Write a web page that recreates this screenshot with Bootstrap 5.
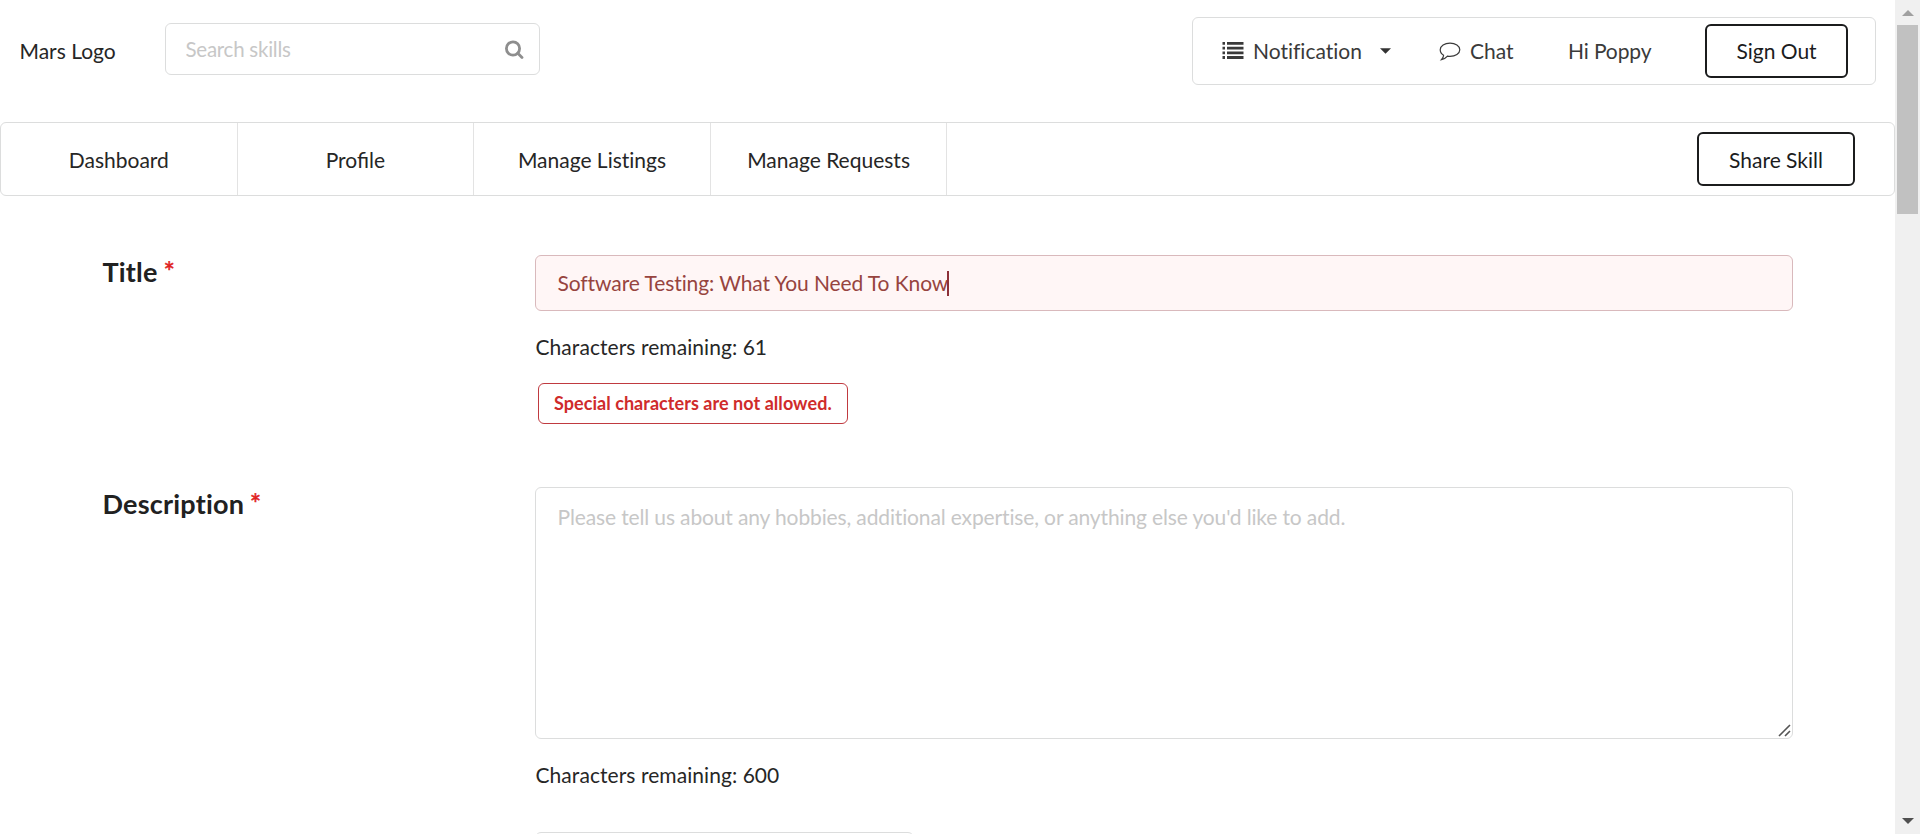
<!DOCTYPE html>
<html lang="en">
<head>
<meta charset="utf-8">
<title>Share Skill</title>
<link rel="stylesheet" href="https://cdn.jsdelivr.net/npm/bootstrap@5.3.0/dist/css/bootstrap.min.css">
<style>
:root { --line: #dcdddd; }
body { font: 21px/30px Lato, "Liberation Sans", sans-serif; color: #262626; background: #fff; }
main { width: 1895px; min-width: 0; }

/* header */
.top-bar { height: 122px; }
.brand { width: 165px; padding: 36px 0 0 19.500px; }
.search-box { width: 375px; height: 52px; margin-top: 23px; border: 1px solid var(--line); border-radius: 6px; padding: 0 15px 0 19.500px; }
.search-box input { font-size: 20.5px; color: #212121; min-width: 0; letter-spacing: -.25px; }
.field-input::placeholder, .search-box input::placeholder { color: #c7c7c7; opacity: 1; }
.user-menu { width: 684px; height: 68px; margin: 17px 19px 0 0; border: 1px solid var(--line); border-radius: 6px; padding-left: 29px; color: #3a3a3a; }
.user-menu > * { flex: none; }
.note-text { width: 127px; margin-left: 9px; font-variant-ligatures: none; }
.note-arrow { margin-right: 48px; }
.chat-text { width: 98px; margin-left: 9px; }
.hi-text { width: 137px; letter-spacing: -.12px; }
.dark-btn { height: 54px; border: 2px solid #1b1c1d; border-radius: 6px; font-size: 21px; line-height: 30px; color: #1b1c1d; padding: 0; }
.sign-out { width: 143px; }

/* section menu */
.main-menu { height: 74px; border: 1px solid var(--line); border-radius: 6px; }
.main-menu a { width: 236.6px; border-right: 1px solid #e3e3e3; color: #262626; padding-top: 1px; }
.main-menu .plain-ti { font-variant-ligatures: none; }
.share-skill { width: 158px; margin-right: 39px; padding-top: 1px; }

/* form */
.form-row { padding-left: 102px; }
.title-row { height: 291px; padding-top: 59px; }
.form-row h3 { width: 433px; font-size: 27px; line-height: 34px; font-weight: 700; margin: 0; color: #212121; letter-spacing: .2px; padding-left: .5px; }
.form-row h3 span { color: #e02020; font-weight: 400; -webkit-text-stroke: .5px #e02020; margin-left: -1px; }
.field-col { width: 1258px; }
.field-input { display: block; width: 100%; border: 1px solid var(--line); border-radius: 6px; padding: 0 22px 0 21.500px; outline: 0; }
.has-error { height: 56px; background: #fff6f6; border-color: #d9b9bc; color: #97443f; letter-spacing: -.09px; }
.caret-line { width: 2px; height: 25px; margin-left: -1px; background: #8d3038; }
.desc-area { height: 252px; padding-top: 14px; resize: none; letter-spacing: -.135px; }
.grip { right: 2px; bottom: 2px; }
.remaining { margin-top: 21px; letter-spacing: .06px; padding-left: .5px; }
.error-label { height: 41px; border: 1px solid #c03a40; border-radius: 6px; color: #cf2b2b; font-size: 18px; font-weight: 700; letter-spacing: .05px; padding: 0 15px 2px; margin: 21px 0 0 3px; }
.next-select { width: 379px; height: 50px; margin-top: 42px; border: 1px solid var(--line); border-radius: 6px; }

/* scroll rail */
.scroll-rail { width: 25px; height: 834px; background: #f0f0f0; padding: 10px 0; }
.scroll-thumb { width: 21px; height: 189px; background: #c1c1c1; margin-top: 9px; }
</style>
</head>
<body class="overflow-hidden">
<div class="d-flex vh-100 overflow-hidden">
  <main class="flex-grow-1">
    <header class="top-bar d-flex align-items-start">
      <div class="brand">Mars Logo</div>
      <div class="search-box d-flex align-items-center">
        <input class="border-0 p-0 flex-grow-1 bg-transparent" placeholder="Search skills">
        <svg width="20" height="20" viewBox="0 0 20 20" fill="none" stroke="#8e8e8e" stroke-width="2.8"><circle cx="9" cy="9.500" r="6.600"/><path d="M13.800 14.300l4.200 4.200" stroke-linecap="round"/></svg>
      </div>
      <nav class="user-menu ms-auto d-flex align-items-center">
        <svg width="22" height="18" viewBox="0 0 22 18" fill="#3a3a3a"><path d="M.5 0h2.500v2.800H.5zM5 0h16.500v2.800H5zM.5 4.700h2.500v2.800H.5zM5 4.700h16.500v2.800H5zM.5 9.400h2.500v2.800H.5zM5 9.400h16.500v2.800H5zM.5 14.100h2.500v2.800H.5zM5 14.100h16.500v2.800H5z"/></svg>
        <span class="note-text">Notification</span>
        <svg class="note-arrow" width="11" height="6" viewBox="0 0 12 6" fill="#333"><path d="M0 0h12L6 6z"/></svg>
        <svg class="chat-icon" width="22" height="20" viewBox="0 0 22 20" fill="none" stroke="#3a3a3a" stroke-width="1.200"><path d="M11 2.200c5.400 0 9.800 2.900 9.800 6.600s-4.400 6.600-9.800 6.600c-.9 0-1.700-.1-2.500-.2C7 17 5 18.100 2.500 18.600c1.300-1.300 2-2.500 2.100-4.300C2.500 13.100 1.200 11 1.200 8.800c0-3.700 4.400-6.600 9.800-6.600z"/></svg>
        <span class="chat-text">Chat</span>
        <span class="hi-text">Hi Poppy</span>
        <button class="btn dark-btn sign-out">Sign Out</button>
      </nav>
    </header>
    <nav class="main-menu d-flex align-items-stretch">
      <a class="d-flex align-items-center justify-content-center text-decoration-none" href="#">Dashboard</a>
      <a class="d-flex align-items-center justify-content-center text-decoration-none" href="#">Profile</a>
      <a class="plain-ti d-flex align-items-center justify-content-center text-decoration-none" href="#">Manage Listings</a>
      <a class="d-flex align-items-center justify-content-center text-decoration-none" href="#">Manage Requests</a>
      <button class="btn dark-btn share-skill ms-auto align-self-center">Share Skill</button>
    </nav>
    <section class="form-row title-row d-flex align-items-start">
      <h3>Title <span>*</span></h3>
      <div class="field-col">
        <div class="field-input has-error d-flex align-items-center">Software Testing: What You Need To Know<i class="caret-line"></i></div>
        <div class="remaining">Characters remaining: 61</div>
        <div class="error-label d-inline-flex align-items-center">Special characters are not allowed.</div>
      </div>
    </section>
    <section class="form-row desc-row d-flex align-items-start">
      <h3>Description <span>*</span></h3>
      <div class="field-col">
        <div class="position-relative">
          <textarea class="field-input desc-area" placeholder="Please tell us about any hobbies, additional expertise, or anything else you'd like to add."></textarea>
          <svg class="grip position-absolute" width="13" height="13" viewBox="0 0 13 13" stroke="#555" stroke-width="1.600"><path d="M1 12L12 1M7 12L12 7"/></svg>
        </div>
        <div class="remaining">Characters remaining: 600</div>
        <div class="next-select"></div>
      </div>
    </section>
  </main>
  <aside class="scroll-rail d-flex flex-column align-items-center flex-shrink-0">
    <svg width="12" height="6" viewBox="0 0 12 6" fill="#a0a0a0"><path d="M0 6h12L6 0z"/></svg>
    <div class="scroll-thumb"></div>
    <svg class="mt-auto" width="12" height="6" viewBox="0 0 12 6" fill="#505050"><path d="M0 0h12L6 6z"/></svg>
  </aside>
</div>
<script src="https://cdn.jsdelivr.net/npm/bootstrap@5.3.0/dist/js/bootstrap.bundle.min.js"></script>
</body>
</html>
